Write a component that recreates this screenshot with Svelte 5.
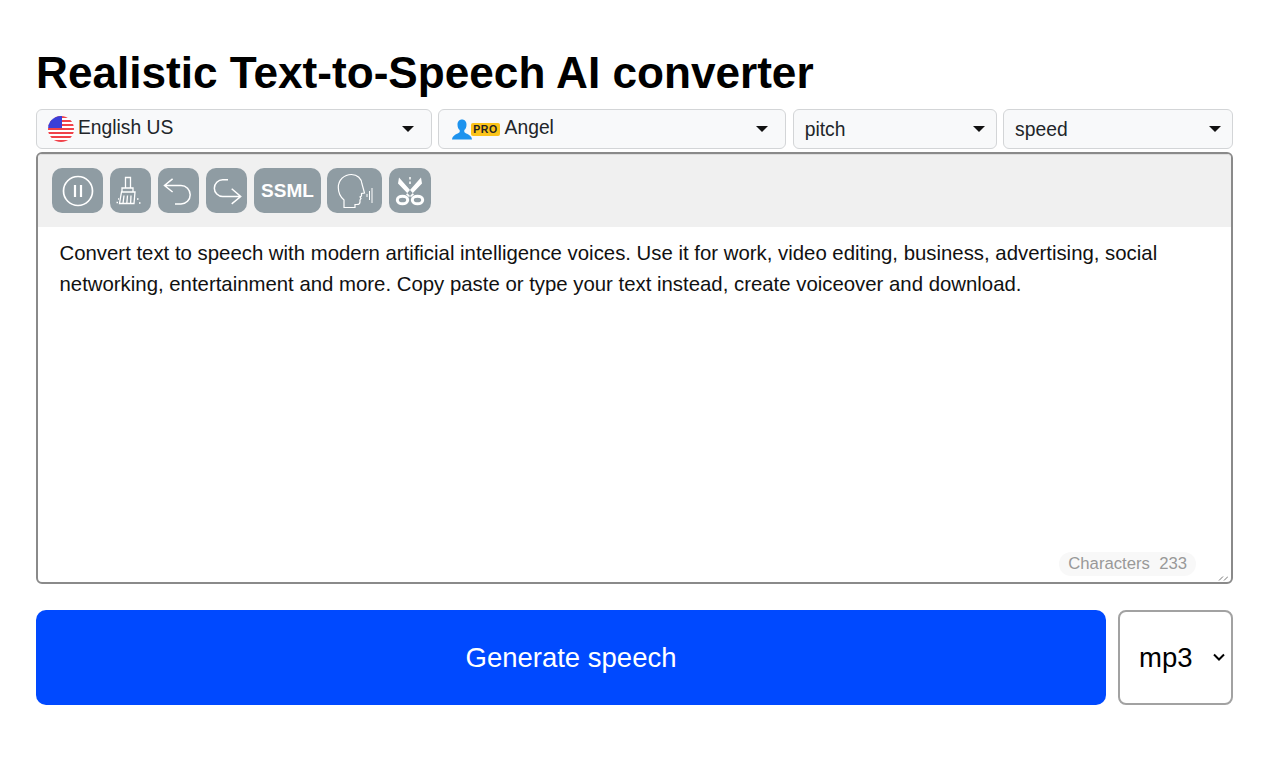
<script>
	const text =
		'Convert text to speech with modern artificial intelligence voices. Use it for work, video editing, business, advertising, social networking, entertainment and more. Copy paste or type your text instead, create voiceover and download.';
	const stripes = [0, 1, 2, 3, 4, 5, 6];
</script>

<main class="page">
	<h1>Realistic Text-to-Speech AI converter</h1>

	<div class="options">
		<div class="picker lang">
			<svg class="flag" viewBox="0 0 26 26" width="26" height="26">
				<defs>
					<clipPath id="flag-circle"><circle cx="13" cy="13" r="13" /></clipPath>
				</defs>
				<g clip-path="url(#flag-circle)">
					<rect width="26" height="26" fill="#fff" />
					{#each stripes as s}
						<rect y={s * 4} width="26" height="2" fill="#f0424a" />
					{/each}
					<rect width="14" height="12" fill="#3b3fd8" />
				</g>
			</svg>
			<span>English US</span>
		</div>
		<div class="picker voice">
			<svg class="person" viewBox="0 0 20 20" width="20" height="21">
				<path
					fill="#1d93ee"
					d="M10 0c2.9 0 4.5 2.2 4.5 5.2 0 2.3-.9 4.4-2.2 5.4v1.700c0 1 3.200 2.200 5.400 3.600 1.200.8 2 1.800 2.300 4.100H0c.3-2.300 1.100-3.300 2.300-4.100 2.200-1.400 5.400-2.600 5.400-3.600v-1.700C6.400 9.600 5.500 7.500 5.500 5.200 5.500 2.200 7.100 0 10 0z"
				/>
			</svg>
			<span class="pro">PRO</span>
			<span>Angel</span>
		</div>
		<div class="picker pitch"><span>pitch</span></div>
		<div class="picker speed"><span>speed</span></div>
	</div>

	<section class="editor">
		<div class="toolbar">
			<button class="tool pause" aria-label="Pause">
				<svg viewBox="0 0 32 32" width="32" height="32" fill="none" stroke="#fff">
					<circle cx="16" cy="16" r="14.500" stroke-width="1.700" />
					<path d="M13 10v12M19 10v12" stroke-width="2.200" />
				</svg>
			</button>
			<button class="tool clear" aria-label="Clear">
				<svg viewBox="0 0 32 32" width="32" height="32" fill="none" stroke="#fff" stroke-width="1.300">
					<path d="M11.500 2.500h5v10.500h-5zM8 13h11v4H8zM7.500 17H21l-1 11.500H5.500z" />
					<path d="M10 20.500l-1 8M13.500 20.500l-.7 8M17 20.500l-.4 8" />
					<path d="M2.500 27.500h1.500M23 24h1.500M25 28h1.500M4 24h1" stroke-width="1.500" />
				</svg>
			</button>
			<button class="tool undo" aria-label="Undo">
				<svg viewBox="0 0 32 32" width="32" height="32" fill="none" stroke="#fff" stroke-width="1.500">
					<path d="M10.600 3.800L2.500 10.500l8.100 6.500M2.500 10.500H19a9.200 9.200 0 0 1 0 18.400h-6" />
				</svg>
			</button>
			<button class="tool redo" aria-label="Redo">
				<svg viewBox="0 0 32 32" width="32" height="32" fill="none" stroke="#fff" stroke-width="1.500">
					<path d="M20.700 13.800l9 7.700-9 7.300M17 4.800h-5.300a8.350 8.350 0 0 0 0 16.700h18" />
				</svg>
			</button>
			<button class="tool ssml">SSML</button>
			<button class="tool voice-tool" aria-label="Voice">
				<svg viewBox="0 0 44 38" width="44" height="38" fill="none" stroke="#fff" stroke-width="1.200">
					<path
						d="M11 35.500V28C7.500 25 5.300 20.500 5.300 15.500 5.300 8 11 2.500 18.500 2.500c6 0 10 4 10.500 9.500l2.500 9-3 .5V24L27 25l1 1.500-1 1.500v2c0 1.500-1 2.500-3 2.500h-2v3z"
					/>
					<path d="M34 22v3M36.500 19v9M39 16v15" stroke-width="1" />
				</svg>
			</button>
			<button class="tool cut" aria-label="Cut">
				<svg viewBox="0 0 32 32" width="32" height="32" fill="none" stroke="#fff">
					<path fill="#fff" stroke="none" d="M5 2.500L20 19.500 17 22 4 8.500zM27 2.500L12 19.500 15 22 28 8.500z" />
					<ellipse cx="8.500" cy="25" rx="5.200" ry="3.800" stroke-width="3" />
					<ellipse cx="23.500" cy="25" rx="5.200" ry="3.800" stroke-width="3" />
					<path d="M16 2v2.500M16 6.500V9" stroke-width="1.500" />
				</svg>
			</button>
		</div>
		<p class="content">{text}</p>
		<span class="count">Characters&nbsp;&nbsp;233</span>
		<svg class="grip" viewBox="0 0 10 6" width="10" height="6" stroke="#777" fill="none">
			<path d="M1 5.500l4-4M6 5.500l4-4" />
		</svg>
	</section>

	<div class="actions">
		<button class="generate">Generate speech</button>
		<div class="format-wrap">
			<select class="format">
				<option>mp3</option>
				<option>wav</option>
			</select>
			<svg viewBox="0 0 12 8" width="12" height="8" fill="none" stroke="#000" stroke-width="2">
				<path d="M1 1.500l5 5 5-5" />
			</svg>
		</div>
	</div>
</main>

<style>
	:global(body) {
		background: #fff;
		color: #000;
		font-family: 'Liberation Sans', Arial, sans-serif;
	}

	.page {
		display: flex;
		flex-direction: column;
		padding: 50px 37px 0 36px;
	}

	h1 {
		font-size: 44.150px;
		line-height: 46px;
		font-weight: 700;
		margin: 0 0 13px;
	}

	.options {
		display: flex;
		gap: 6.500px;
		height: 40px;
	}

	.picker {
		display: flex;
		align-items: center;
		position: relative;
		box-sizing: border-box;
		background: #f8f9fa;
		border: 1px solid #d3d5d7;
		border-radius: 6px;
		font-size: 19.300px;
		color: #212529;
		padding-left: 11px;
	}

	.picker::after {
		content: '';
		position: absolute;
		right: 17px;
		top: 16px;
		border-top: 6px solid #111;
		border-left: 6px solid transparent;
		border-right: 6px solid transparent;
	}

	.lang {
		width: 396px;
		gap: 4px;
		padding-bottom: 3px;
	}

	.flag {
		margin-top: 3px;
	}

	.voice {
		width: 348px;
		gap: 5px;
		padding-left: 13px;
		padding-bottom: 2px;
	}

	.pitch {
		width: 204px;
		padding-top: 1px;
	}

	.speed {
		width: 230px;
		padding-top: 1px;
	}

	.pitch::after,
	.speed::after {
		right: 11px;
	}

	.person {
		margin-right: -6px;
		margin-top: 2px;
	}

	.pro {
		background: #fcc419;
		color: #222;
		font-size: 10.500px;
		font-weight: 700;
		letter-spacing: 0.5px;
		line-height: 13px;
		padding: 0 2px;
		border-radius: 2px;
		margin-top: 2px;
	}

	.editor {
		position: relative;
		box-sizing: border-box;
		height: 432px;
		margin-top: 3px;
		border: 2px solid #8a8a8a;
		border-radius: 6px;
	}

	.toolbar {
		display: flex;
		gap: 6.800px;
		height: 73px;
		box-sizing: border-box;
		padding: 13px 14px 0;
		background: #f0f0f0;
		border-top: 1px solid #dedede;
		border-radius: 4px 4px 0 0;
	}

	.tool {
		display: flex;
		align-items: center;
		justify-content: center;
		height: 45px;
		padding: 0;
		border: 0;
		border-radius: 10px;
		background: #8f9ca3;
		color: #fff;
		font-family: inherit;
	}

	.pause {
		width: 51px;
	}

	.clear {
		width: 41px;
	}

	.undo,
	.redo {
		width: 41.500px;
	}

	.cut {
		width: 42px;
	}

	.ssml {
		width: 66.500px;
		font-size: 19px;
		font-weight: 700;
	}

	.voice-tool {
		width: 55px;
	}

	.content {
		margin: 0;
		padding: 11px 21.500px;
		font-size: 20.370px;
		line-height: 31px;
		color: #111;
	}

	.count {
		position: absolute;
		right: 35px;
		bottom: 6px;
		padding: 2px 9px;
		border-radius: 12px;
		background: #f8f8f8;
		color: #999;
		font-size: 16.700px;
		line-height: 20px;
	}

	.grip {
		position: absolute;
		right: 3px;
		bottom: 1px;
	}

	.actions {
		display: flex;
		gap: 12px;
		height: 95px;
		margin-top: 26px;
	}

	.generate {
		flex: 1;
		border: 0;
		border-radius: 10px;
		background: #0049ff;
		color: #fff;
		font-family: inherit;
		font-size: 27.500px;
	}

	.format-wrap {
		position: relative;
		display: flex;
		width: 115px;
	}

	.format-wrap svg {
		position: absolute;
		right: 8px;
		top: 43px;
		pointer-events: none;
	}

	.format {
		appearance: none;
		width: 100%;
		box-sizing: border-box;
		padding-left: 19px;
		border: 2px solid #a2a2a2;
		border-radius: 8px;
		background: #fff;
		color: #000;
		font-family: inherit;
		font-size: 27.500px;
	}
</style>
